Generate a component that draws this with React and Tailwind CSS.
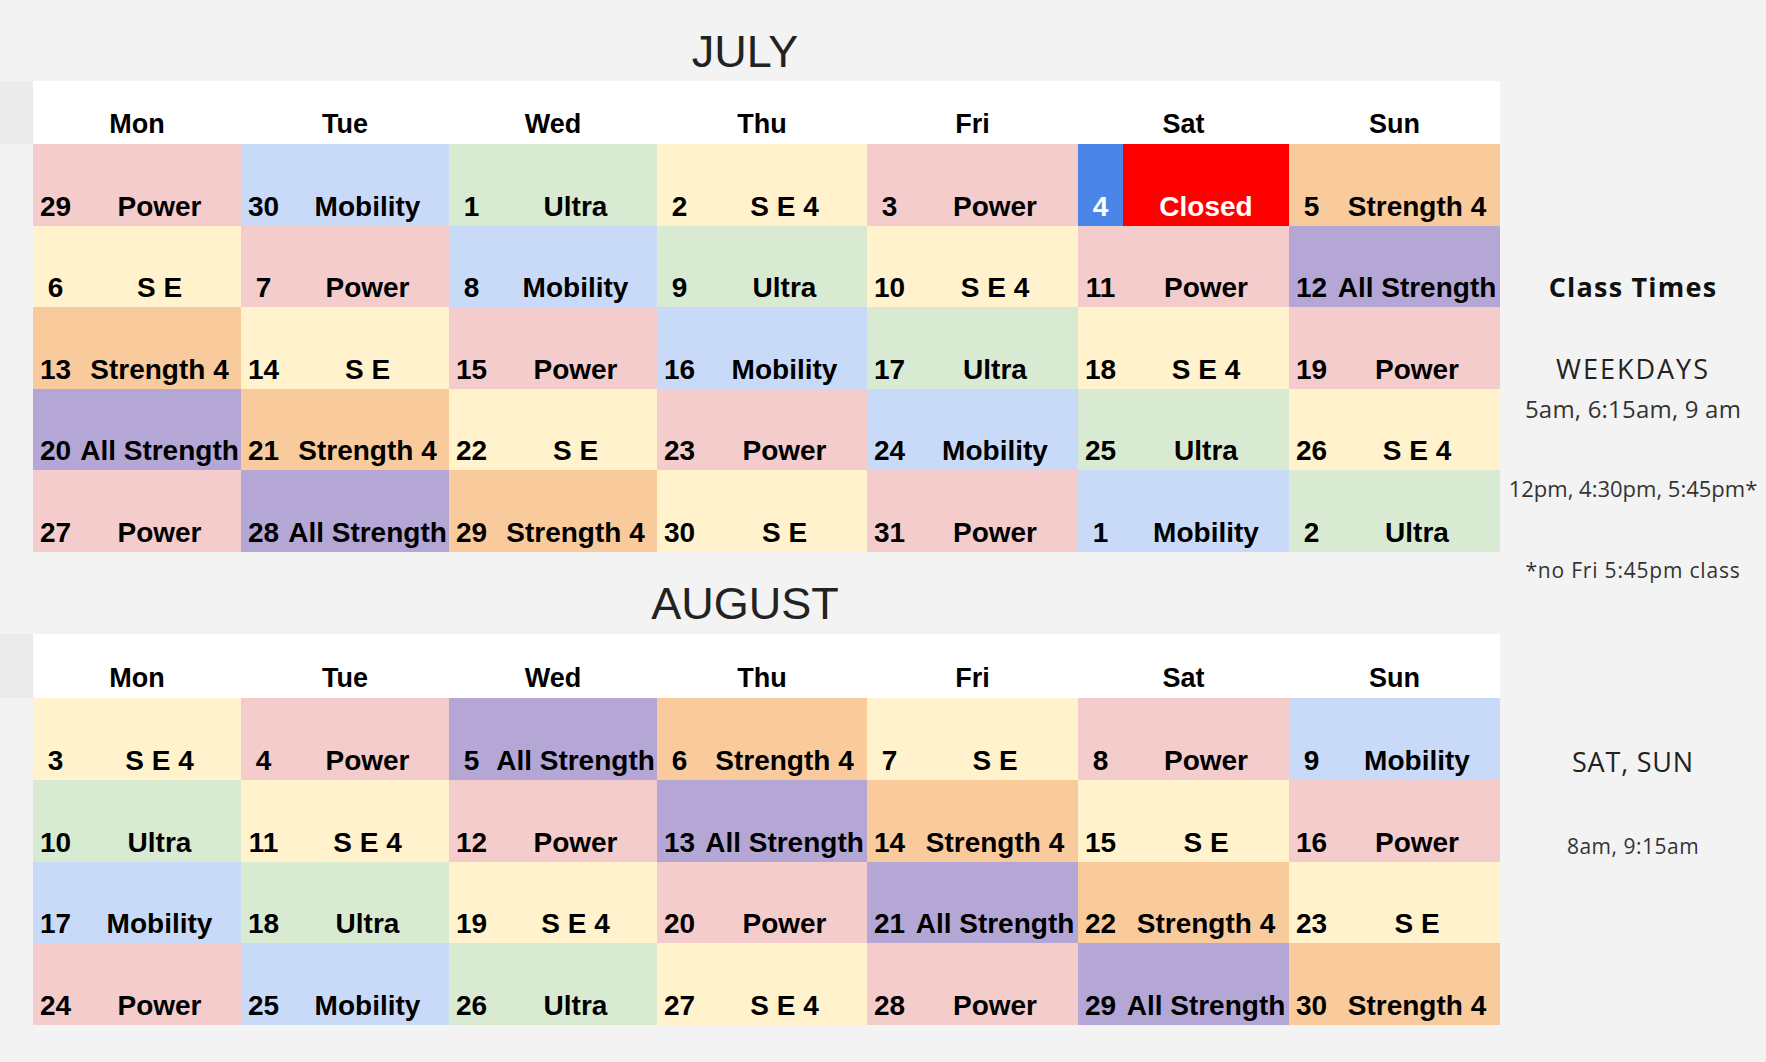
import React from "react";

const BG = {
  p: "bg-[#f4cccc]",
  b: "bg-[#c9daf8]",
  g: "bg-[#d9ead3]",
  y: "bg-[#fff2cc]",
  o: "bg-[#f9cb9c]",
  v: "bg-[#b4a7d6]",
};

const CLASS = {
  Power: "p",
  Mobility: "b",
  Ultra: "g",
  "S E 4": "y",
  "S E": "y",
  "Strength 4": "o",
  "All Strength": "v",
};

// spreadsheet columns are not quite equal
const COLS = "grid grid-cols-[208px_208px_208px_210px_211px_211px_211px]";

const days = ["Mon", "Tue", "Wed", "Thu", "Fri", "Sat", "Sun"];

const july = [
  [[29, "Power"], [30, "Mobility"], [1, "Ultra"], [2, "S E 4"], [3, "Power"], [4, "Closed"], [5, "Strength 4"]],
  [[6, "S E"], [7, "Power"], [8, "Mobility"], [9, "Ultra"], [10, "S E 4"], [11, "Power"], [12, "All Strength"]],
  [[13, "Strength 4"], [14, "S E"], [15, "Power"], [16, "Mobility"], [17, "Ultra"], [18, "S E 4"], [19, "Power"]],
  [[20, "All Strength"], [21, "Strength 4"], [22, "S E"], [23, "Power"], [24, "Mobility"], [25, "Ultra"], [26, "S E 4"]],
  [[27, "Power"], [28, "All Strength"], [29, "Strength 4"], [30, "S E"], [31, "Power"], [1, "Mobility"], [2, "Ultra"]],
];

const august = [
  [[3, "S E 4"], [4, "Power"], [5, "All Strength"], [6, "Strength 4"], [7, "S E"], [8, "Power"], [9, "Mobility"]],
  [[10, "Ultra"], [11, "S E 4"], [12, "Power"], [13, "All Strength"], [14, "Strength 4"], [15, "S E"], [16, "Power"]],
  [[17, "Mobility"], [18, "Ultra"], [19, "S E 4"], [20, "Power"], [21, "All Strength"], [22, "Strength 4"], [23, "S E"]],
  [[24, "Power"], [25, "Mobility"], [26, "Ultra"], [27, "S E 4"], [28, "Power"], [29, "All Strength"], [30, "Strength 4"]],
];

function Cell({ day, label }) {
  const closed = label === "Closed";
  const numBg = closed ? "bg-[#4a86e8] text-white" : BG[CLASS[label]];
  const labelBg = closed ? "bg-[#ff0000] text-white" : BG[CLASS[label]];
  return (
    <div className="flex h-full">
      <div className={`w-[45px] shrink-0 flex items-end justify-center pb-[5px] ${numBg}`}>{day}</div>
      <div className={`flex-1 flex items-end justify-center pb-[5px] whitespace-nowrap ${labelBg}`}>{label}</div>
    </div>
  );
}

function Month({ title, weeks, titleH, titlePb, headH, rowH }) {
  return (
    <div>
      <div
        className={`w-[1490px] flex items-end justify-center text-[45px] leading-none text-[#222] ${titleH} ${titlePb}`}
        style={{ fontFamily: '"Liberation Sans", Arial, sans-serif' }}
      >
        {title}
      </div>
      <div className="flex" style={{ fontFamily: '"Liberation Sans", Arial, sans-serif' }}>
        <div className={`w-[33px] bg-[#ebebeb] ${headH}`} />
        <div className="w-[1467px]">
          <div className={`${COLS} bg-white text-[27px] font-bold leading-none text-black ${headH}`}>
            {days.map((d) => (
              <div key={d} className="flex items-end justify-center pb-[6px]">
                {d}
              </div>
            ))}
          </div>
          {weeks.map((w, i) => (
            <div key={i} className={`${COLS} text-[28px] font-bold leading-none text-black ${rowH}`}>
              {w.map(([d, l], j) => (
                <Cell key={j} day={d} label={l} />
              ))}
            </div>
          ))}
        </div>
      </div>
    </div>
  );
}

export default function App() {
  return (
    <div className="w-[1766px] h-[1062px] bg-[#f3f3f3] flex overflow-hidden">
      <div className="w-[1500px] shrink-0">
        <Month title="JULY" weeks={july} titleH="h-[81px]" titlePb="pb-[7px]" headH="h-[63px]" rowH="h-[81.5px]" />
        <Month title="AUGUST" weeks={august} titleH="h-[82.5px]" titlePb="pb-[8px]" headH="h-[64px]" rowH="h-[81.75px]" />
      </div>
      <div
        className="flex-1 flex flex-col items-center text-center leading-none text-[#222] whitespace-nowrap"
        style={{ fontFamily: '"Open Sans", sans-serif' }}
      >
        <div className="mt-[273px] text-[27px] font-bold tracking-[1.2px] text-[#111]">Class Times</div>
        <div className="mt-[55px] text-[27px] tracking-[2px]">WEEKDAYS</div>
        <div className="mt-[15px] text-[24px] tracking-[0.2px] text-[#333]">5am, 6:15am, 9 am</div>
        <div className="mt-[56px] text-[22px] text-[#333]">12pm, 4:30pm, 5:45pm*</div>
        <div className="mt-[61px] text-[21px] tracking-[0.8px] text-[#333]">*no Fri 5:45pm class</div>
        <div className="mt-[167px] text-[27px] tracking-[0.8px]">SAT, SUN</div>
        <div className="mt-[61px] text-[21px] tracking-[0.5px] text-[#333]">8am, 9:15am</div>
      </div>
    </div>
  );
}
